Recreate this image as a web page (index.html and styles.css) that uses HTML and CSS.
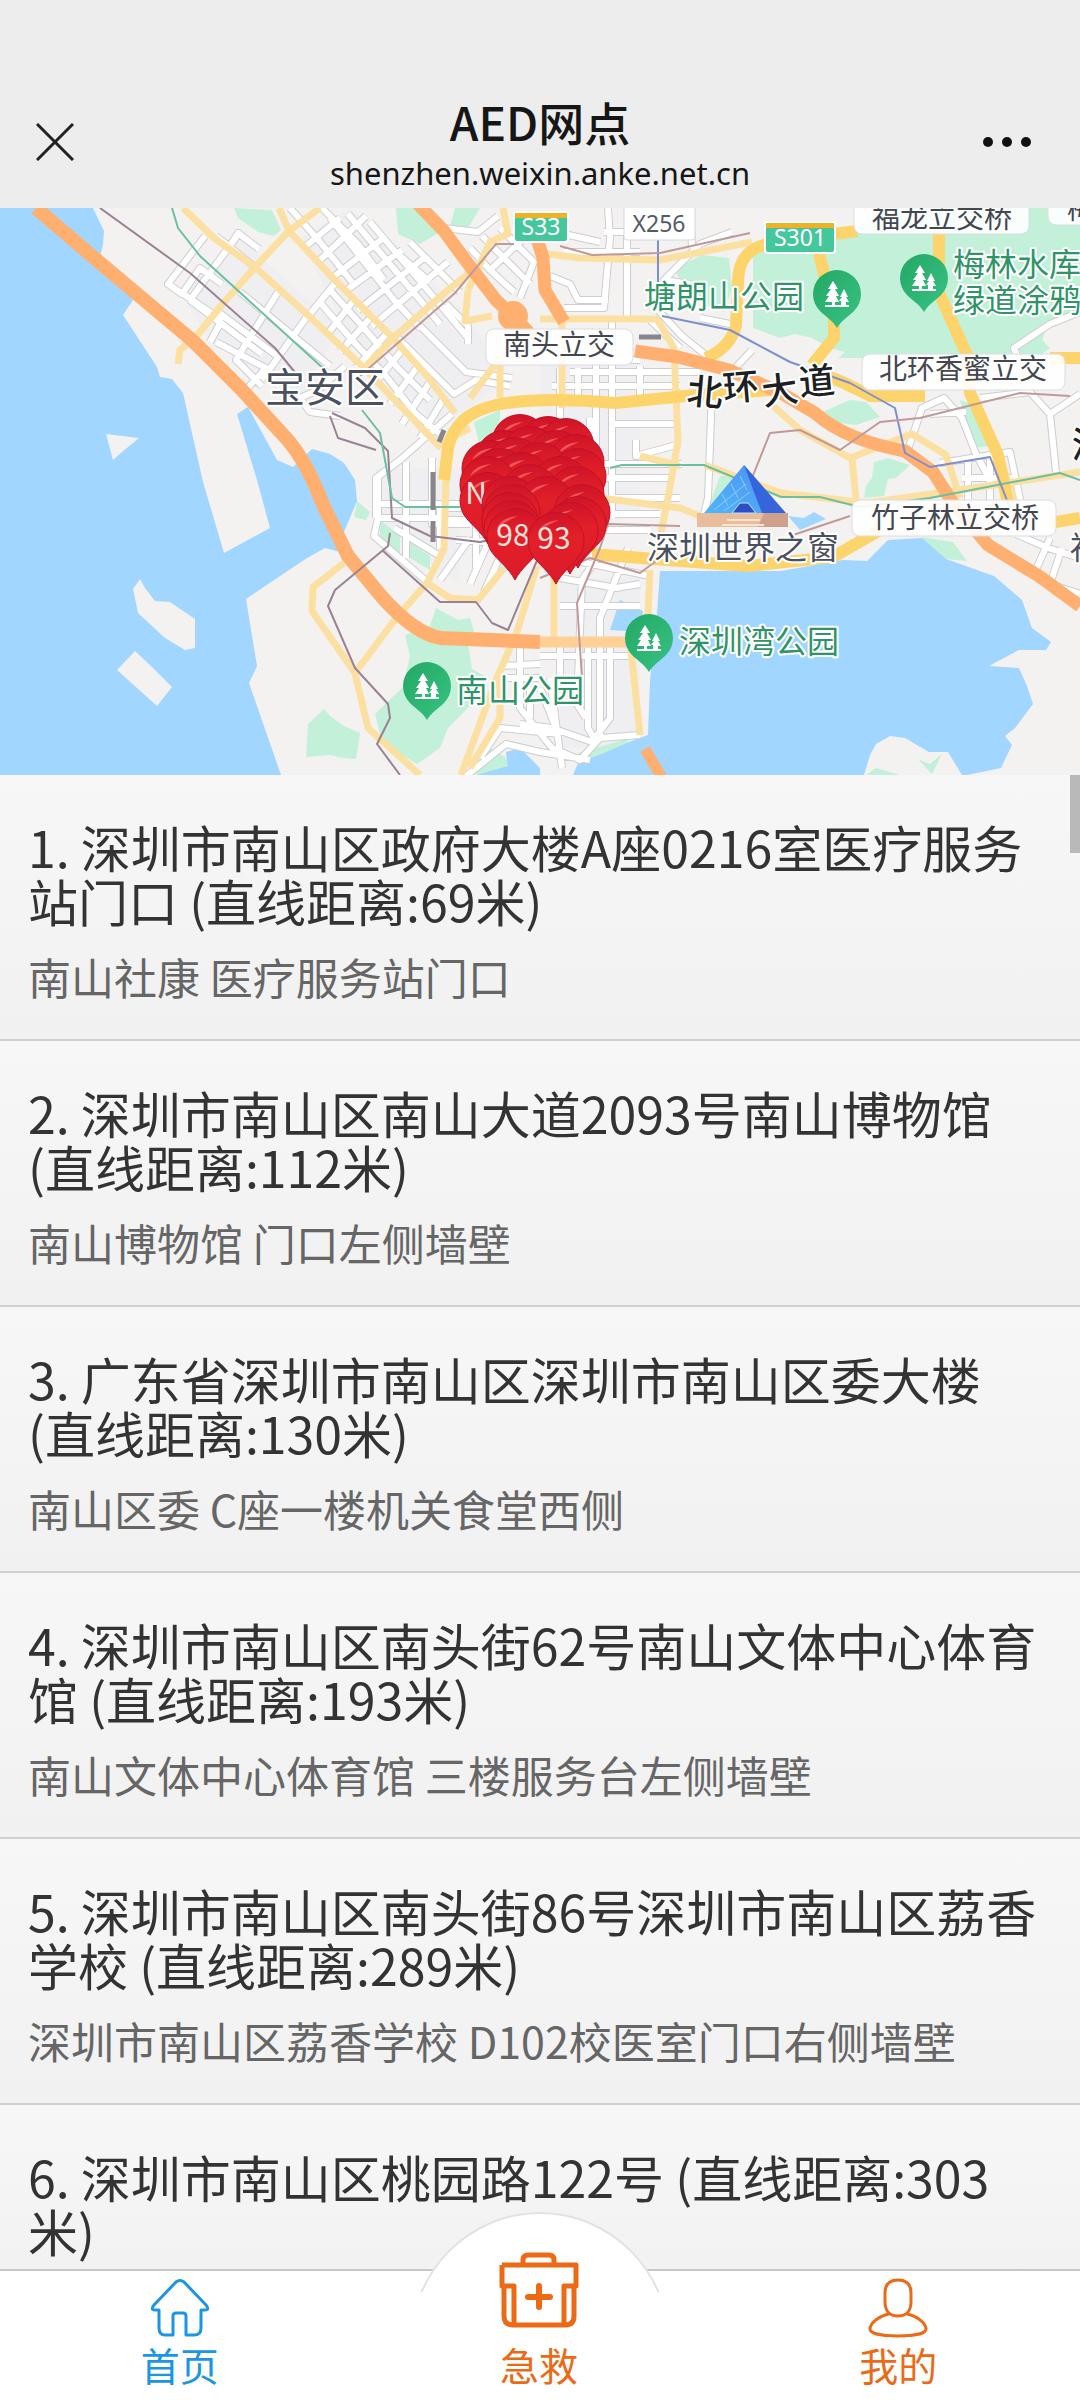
FILE: index.html
```html
<!DOCTYPE html>
<html lang="zh-CN">
<head>
    <meta charset="UTF-8">
    <meta name="viewport" content="width=device-width, initial-scale=1">
    <title>AED网点</title>
    <link rel="stylesheet" href="styles.css">
</head>
<body>

<div class="header">
    <button class="header-btn" type="button" aria-label="关闭">
        <svg width="38" height="38" viewBox="0 0 38 38"><path d="M1 1L37 37M37 1L1 37" stroke="#222" stroke-width="3" fill="none"/></svg>
    </button>
    <div class="header-title">
        <h1>AED网点</h1>
        <p>shenzhen.weixin.anke.net.cn</p>
    </div>
    <button class="header-btn more" type="button" aria-label="更多">
        <svg width="50" height="12" viewBox="0 0 50 12" fill="#111"><circle cx="6" cy="6" r="5"/><circle cx="25" cy="6" r="5"/><circle cx="44" cy="6" r="5"/></svg>
    </button>
</div>

<div class="map">
    <svg viewBox="0 0 1080 567" preserveAspectRatio="xMidYMin slice">
        <defs>
            <linearGradient id="park" x1="0" y1="0" x2="1" y2="1">
                <stop offset="0" stop-color="#24a765"/><stop offset="1" stop-color="#37c383"/>
            </linearGradient>
            <linearGradient id="red" x1="0" y1="0" x2="0" y2="1">
                <stop offset="0" stop-color="#cf1329"/><stop offset="0.35" stop-color="#e32028"/><stop offset="1" stop-color="#dc1a2b"/>
            </linearGradient>
            <linearGradient id="glass" x1="0" y1="1" x2="1" y2="0">
                <stop offset="0" stop-color="#4fb6fb"/><stop offset="1" stop-color="#4f8eee"/>
            </linearGradient>
            <g id="tree">
                <path d="M0 34C-4 27-12 22-17 17A24 24 0 1 1 17 17C12 22 4 27 0 34Z" fill="url(#park)"/>
                <path d="M-4-13L-9-5H-6L-11 2H-8L-12 8H-5V11H-12V13H12V11H9V8H12L9 3H11L7-5L3 3H5L2 7H4V11H-2V8H2L-1 2H2L-2-5H1Z" fill="#fff"/>
            </g>
            <g id="pin">
                <path d="M0 44C-6 32-18 24-24 15A28 28 0 1 1 24 15C18 24 6 32 0 44Z" fill="url(#red)" stroke="#c01226" stroke-width="1"/>
                <path d="M-18-8Q-13-19 3-20Q-9-15-18-8Z" fill="#f0565a"/>
            </g>
            <!-- 小路，先描灰边再描白色 -->
            <path id="streets" d="M205 28L168 76L222 112M240 24L190 92M216 28L256 60M230 38L238 25L259 41M168 76L182 86L200 60L222 76M190 92L262 146M278 84L236 152L262 178M306 110L262 172M222 112L210 134M216 134L266 160L244 184M240 84L330 158M218 104L280 150M345 158L318 182L300 190L310 204L340 208
                M290 0L320 34L352 74M306 38L340 10M318 54L366 8M332 70L386 28M344 84L402 42M358 102L424 50M372 118L448 54M330 10L394 92L420 120M348 6L440 116M370 14L448 106L468 130M322 0L358 36L384 72M396 44L430 74M410 34L460 84M336 74L310 106M354 92L326 128M372 108L340 144M390 122L356 160M404 140L374 176M418 158L390 196M430 174L402 216M444 190L420 230M452 206L400 252L376 270V310M318 92L352 132L386 168L414 204L440 226M330 82L364 120L398 160L430 192
                M444 20L478 24L498 8M470 40L490 62L522 32M482 28L530 76M500 20L534 54L520 90M490 62L514 84M398 130L454 186L476 172L510 178M420 118L466 164L512 170M446 96L468 118V136
                M378 270V310L374 328L430 376M406 254V350M432 250V316L470 316M376 296H460M380 310H440M394 320L440 348M440 340V300H470M456 332L500 334M470 330L440 372M490 330L470 376M504 340L484 384M444 312H476V360
                M608 0L610 30L604 100H564M627 20V112M604 24H628M550 68L570 76L578 92L608 92M564 26L600 34M564 44H640M560 160V210M578 160V190M612 112V310M596 120V300M570 164H700M566 150L640 152M640 158V190M552 178H680M590 210V262M612 216H676M636 232V248L680 236M600 256H682M596 270H670M612 290H680M612 306H660M606 322H650M712 182L708 290L704 306M650 112L680 140M690 76L664 72L700 36L732 24M690 0L692 40M656 100L682 128L712 152M726 170L752 142M700 110L740 118
                M560 370L616 380L640 376M562 350L650 368M560 398H640M604 340L582 372L578 470M628 340L600 410V530L640 527M560 434V470L586 510M540 448H632M550 470L562 560M588 440V520L596 534M610 440V510L592 534L552 520L520 516M500 458L540 456M506 470H540M520 440V500L552 540L580 552L600 530M466 568L506 536L540 544L590 552M480 550L500 520L560 526M540 480L556 520M530 480V510
                M905 250L922 200L944 190L962 210L976 246L990 272M930 206L966 204M980 190L1030 184L1050 206L1056 264M1030 184L1014 140L1050 116L1080 104M1050 206L1080 186M940 255L1010 244L1024 310M968 250V300M990 244V300M962 270H1012M1016 326L1048 340L1080 350M1050 330L1034 366M1062 340L1050 376L1080 386"/>
        </defs>

        <rect width="1080" height="567" fill="#f3f2f1"/>

        <!-- 街区 -->
        <g fill="#efeff1">
            <path d="M180 84L240 30L340 120L300 190L210 134Z"/>
            <path d="M300 30L350 0L460 100L510 170L440 220L350 130Z"/>
            <path d="M376 260H460V376L374 320ZM540 140H640V310H540ZM560 370H640V540H560Z"/>
        </g>

        <!-- 绿地 -->
        <g fill="#c3f0d9">
            <path d="M234 0L272 2L281 22L274 28L258 24L238 10ZM396 0H424L442 23L420 36L398 26ZM455 0H480L468 20L450 18Z"/>
            <path d="M674 61L702 47L729 50L732 80L724 104L690 90Z"/>
            <path d="M753 47L780 26L856 22L880 0H1080V106L1048 116L1042 132L1050 140L1036 150H838L845 144L830 140L812 130L795 126L780 130L753 120Z"/>
            <path d="M818 206L850 192L866 194L880 209L856 217L830 214Z"/>
            <path d="M874 254L888 250L910 257L896 270L888 271L884 288L864 290L866 278L872 270Z"/>
            <path d="M960 192L972 196L990 238L974 240ZM720 268H736L724 300H708ZM474 214L500 202V236L480 240ZM922 329L953 334L967 353L946 351L928 340Z"/>
            <path d="M324 501L330 508L344 518L360 525L356 551L344 550L330 547L306 549L308 516Z"/>
            <path d="M405 427L430 418L436 400L458 412L470 410L474 424L468 436L472 461L488 470L478 490L448 520L440 540L417 556L382 534L375 506L403 479L410 448Z"/>
            <path d="M357 293L370 304L366 312L354 309ZM380 312L400 328V346L380 330ZM410 334L430 348V362L410 350ZM470 560L490 540L510 552V568H478ZM578 545L630 530L610 560H586Z"/>
        </g>

        <!-- 海面 -->
        <g fill="#a0d6ff">
            <path d="M0 0H93L104 23L103 37L99 52L133 92L123 107L157 159L160 169L172 171L183 185L203 274L224 345L270 320L257 272L237 206L248 199L277 252L293 259L312 241L330 246L344 255L355 272L357 293L344 324L344 345L325 340L307 350L246 391L257 458L249 475L281 567H0Z"/>
            <path d="M660 363L781 363L843 352L867 353L888 332L922 330L946 351L994 368L1022 392L1032 420L1051 434L1046 442L1019 442L989 458L1019 460L1027 478L1033 496L1015 520L1005 528L1012 537L1001 560L967 567H962L948 544L929 544L905 530L890 528L876 536L870 547L864 567H573L578 555L604 545L629 534L648 527L650 472L656 420Z"/>
            <path d="M620 392L643 403L640 424L610 422ZM506 544L520 540L540 560V567H477L508 558ZM788 308L804 310L814 304L826 311L800 322Z"/>
        </g>
        <path d="M866 567L876 560L900 567ZM918 551L930 556L942 546L932 566L928 562Z" fill="#c3f0d9"/>
        <g fill="#f3f2f1">
            <path d="M106 226L139 230L122 244L113 252Z"/>
            <path d="M140 371L145 380L155 393L170 394L195 411V440L185 442L165 430L138 405L133 381Z"/>
            <path d="M135 443L152 459L172 479L157 498L117 462Z"/>
        </g>

        <g fill="none" stroke-linejoin="round">
            <use href="#streets" stroke="#cdcdd2" stroke-width="8"/>
            <use href="#streets" stroke="#fff" stroke-width="6"/>

            <!-- 次干道 -->
            <g stroke="#fbe0a2" stroke-width="7">
                <path d="M183 0L214 30L255 59L310 109L365 161L441 240M320 0L289 23L255 59L220 99L195 130L180 142L178 156M279 0L289 23L331 68L365 102L393 130L427 168L455 205M360 165L393 130L448 82L468 66M468 82L465 113L492 108M503 0L508 26L490 34L468 82"/>
                <path d="M344 355L313 379L312 403L355 465L368 520L420 567M355 465L396 410L427 375L444 341L446 272M427 375L450 390L478 392L504 360M540 45L580 50L660 52L752 34M540 111H657L674 140L678 233L668 290L660 330M562 112V200M554 368V434M537 358L517 424L496 472L461 567M470 560L500 510V470M650 362L648 406L630 434L634 470L640 527"/>
                <path d="M705 257L781 285L867 295L988 278L1080 264M770 195L800 222L850 250L912 226L946 247L960 290M852 250L856 292M1000 250L1015 295M600 290L680 300L705 310M640 248L680 258"/>
                <path d="M440 236L470 220M470 190L500 150V190"/>
            </g>

            <!-- 快速路 -->
            <g stroke="#fdd36b" stroke-width="12">
                <path d="M444 272L448 240Q455 206 496 197T616 195L685 188L770 182"/>
                <path d="M857 23L833 26L775 35Q738 38 738 75L736 118Q730 140 706 150M819 45L834 108L834 130L812 157M939 26V85L967 147L970 185L998 247L1008 296"/>
                <path d="M592 346L654 351L747 358L833 349L880 322M1050 315L1080 310M815 164L840 173L871 188L925 188M1050 150H1080"/>
            </g>

            <!-- 高速 -->
            <g stroke="#ffb070">
                <path d="M36 0L93 49L193 133L241 181L286 230Q306 252 324 299L348 348L382 389Q415 426 441 430L540 434" stroke-width="14"/>
                <path d="M418 -4L444 23L472 61L496 92L517 112L534 130M535 24L543 50L545 82L564 114M635 143L678 149L729 162L781 185L815 205Q845 232 905 243L933 264L953 295L988 337L1039 368L1080 398" stroke-width="13"/>
                <path d="M645 541L662 570" stroke-width="11"/>
                <path d="M540 434H628" stroke="#ffd095" stroke-width="11"/>
            </g>
            <circle cx="513" cy="108" r="15" fill="#ffb070"/>

            <!-- 铁路和地铁 -->
            <path d="M100 0L190 65L275 140L298 168M332 205L365 220L388 243L392 310L430 328L480 334L510 328M330 208L338 230L376 242M390 325L388 338L335 382L328 398L355 460L388 496L390 510L377 536L400 567M382 342L440 394L476 394L492 415L508 422L538 350" stroke="#9a8294" stroke-width="2"/>
            <path d="M172 0L178 20L200 48L325 162M362 202L380 225L392 290L405 299H460M610 260L622 257H704L781 289L820 289L860 299L930 290L1060 265L1080 272" stroke="#6cbfa0" stroke-width="2"/>
            <path d="M658 30V75M662 108L730 122L790 154L850 175L895 200L905 245L930 259L990 249L1010 300" stroke="#7f8fce" stroke-width="2"/>
            <path d="M514 36H496L455 85L360 168M560 38L592 47L660 45L750 25M752 270L770 225L800 222L840 242L880 214L920 210L1020 185L1070 188M540 370L590 350L640 365L660 350M582 470L577 395L600 340L608 316L680 318M790 328L850 308" stroke="#c09a98" stroke-width="2"/>
            <path d="M439 234L444 222M433 264V302M433 313V334M639 129H661" stroke="#88868c" stroke-width="5"/>
        </g>

        <!-- 世界之窗 -->
        <path d="M697 305H788V319H697Z" fill="#e8bd9c"/>
        <path d="M764 305H788V319H758Z" fill="#cfa08c"/>
        <path d="M727 312H760M722 317H764" stroke="#f7e2d2" stroke-width="2"/>
        <path d="M744 257L704 305H784Z" fill="url(#glass)"/>
        <path d="M744 257L786 305H762L754 284Z" fill="#3565da"/>
        <path d="M732 305L740 295H748L756 305Z" fill="#2b4fc4" stroke="#bfe3ff" stroke-width="1"/>
        <path d="M714 302L746 276M724 303L750 284M722 286L728 298M731 276L738 290M740 268L747 282" stroke="#8fcbfc" stroke-width="1"/>

        <!-- 道路编号 -->
        <g class="road-no">
            <rect x="514" y="4" width="54" height="30" rx="3" fill="#45c79d" stroke="#fff" stroke-width="2"/>
            <path d="M515 5H567V10H515Z" fill="#efb224"/>
            <text x="541" y="27" fill="#fff">S33</text>
            <rect x="765" y="14" width="70" height="31" rx="3" fill="#45c79d" stroke="#fff" stroke-width="2"/>
            <path d="M766 15H834V20H766Z" fill="#efb224"/>
            <text x="800" y="38" fill="#fff">S301</text>
            <rect x="624" y="-6" width="71" height="38" rx="3" fill="#fff" stroke="#d5d5df" stroke-width="1"/>
            <text x="659" y="24" fill="#555b66">X256</text>
        </g>

        <!-- 立交 -->
        <g class="junction">
            <rect x="486" y="121" width="147" height="36" rx="8"/><text x="559" y="147">南头立交</text>
            <rect x="854" y="-10" width="175" height="36" rx="8"/><text x="942" y="20">福龙立交桥</text>
            <rect x="1048" y="-10" width="80" height="27" rx="8"/><text x="1081" y="11">梅</text>
            <rect x="862" y="146" width="203" height="36" rx="8"/><text x="963" y="171">北环香蜜立交</text>
            <rect x="852" y="292" width="204" height="36" rx="8"/><text x="955" y="320">竹子林立交桥</text>
        </g>

        <g class="place">
            <text class="district" x="325" y="194">宝安区</text>
            <text x="743" y="351">深圳世界之窗</text>
            <text x="1086" y="351">福</text>
            <text class="road" x="705" y="197" transform="rotate(5 705 185)">北</text>
            <text class="road" x="741" y="192" transform="rotate(-5 741 181)">环</text>
            <text class="road" x="780" y="195" transform="rotate(-8 780 183)">大</text>
            <text class="road" x="817" y="186" transform="rotate(-5 817 175)">道</text>
            <text class="road" x="1090" y="250">深</text>
        </g>
        <g class="place park">
            <text x="724" y="100">塘朗山公园</text>
            <text x="1017" y="68">梅林水库</text>
            <text x="1017" y="104">绿道涂鸦</text>
            <text x="520" y="494">南山公园</text>
            <text x="759" y="445">深圳湾公园</text>
        </g>
        <use href="#tree" x="837" y="86"/>
        <use href="#tree" x="924" y="70"/>
        <use href="#tree" x="427" y="478"/>
        <use href="#tree" x="649" y="430"/>

        <!-- AED 标记 -->
        <g class="pins">
            <use href="#pin" x="520" y="234"/><use href="#pin" x="548" y="236"/><use href="#pin" x="566" y="238"/>
            <use href="#pin" x="504" y="250"/><use href="#pin" x="530" y="246"/><use href="#pin" x="556" y="250"/>
            <use href="#pin" x="576" y="254"/><use href="#pin" x="490" y="260"/><use href="#pin" x="515" y="257"/>
            <use href="#pin" x="540" y="262"/><use href="#pin" x="500" y="268"/><use href="#pin" x="578" y="268"/>
            <use href="#pin" x="522" y="272"/><use href="#pin" x="560" y="276"/><use href="#pin" x="488" y="276"/>
            <use href="#pin" x="530" y="284"/><use href="#pin" x="576" y="286"/><use href="#pin" x="488" y="292"/>
            <text x="476" y="296">N</text>
            <use href="#pin" x="510" y="296"/><use href="#pin" x="546" y="296"/>
            <use href="#pin" x="582" y="304"/><use href="#pin" x="512" y="304"/><use href="#pin" x="510" y="312"/>
            <use href="#pin" x="512" y="320"/><use href="#pin" x="578" y="316"/><use href="#pin" x="570" y="322"/>
            <use href="#pin" x="515" y="328"/><text x="513" y="338">98</text>
            <use href="#pin" x="556" y="332"/><text x="554" y="341">93</text>
        </g>
    </svg>
</div>

<div class="list">
    <a class="item" href="#">
        <h2>1. 深圳市南山区政府大楼A座0216室医疗服务站门口 (直线距离:69米)</h2>
        <p>南山社康 医疗服务站门口</p>
    </a>
    <a class="item" href="#">
        <h2>2. 深圳市南山区南山大道2093号南山博物馆 (直线距离:112米)</h2>
        <p>南山博物馆 门口左侧墙壁</p>
    </a>
    <a class="item" href="#">
        <h2>3. 广东省深圳市南山区深圳市南山区委大楼 (直线距离:130米)</h2>
        <p>南山区委 C座一楼机关食堂西侧</p>
    </a>
    <a class="item" href="#">
        <h2>4. 深圳市南山区南头街62号南山文体中心体育馆 (直线距离:193米)</h2>
        <p>南山文体中心体育馆 三楼服务台左侧墙壁</p>
    </a>
    <a class="item" href="#">
        <h2>5. 深圳市南山区南头街86号深圳市南山区荔香学校 (直线距离:289米)</h2>
        <p>深圳市南山区荔香学校 D102校医室门口右侧墙壁</p>
    </a>
    <a class="item" href="#">
        <h2>6. 深圳市南山区桃园路122号 (直线距离:303米)</h2>
    </a>
    <div class="scroll-thumb"></div>
</div>

<div class="tabbar">
    <div class="bump"></div>
    <a class="tab active" href="#">
        <svg width="60" height="60" viewBox="0 0 60 60"><path d="M26 4Q30 1 34 4L56 27Q60 32 55 32H51V50Q51 57 44 57H36V38Q36 35 33 35H26Q23 35 23 38V57H15Q9 57 9 50V32H5Q0 32 4 27Z"/></svg>
        <span>首页</span>
    </a>
    <a class="tab" href="#">
        <svg class="kit" width="80" height="76" viewBox="0 0 80 76"><path d="M24 12V8Q24 3 29 3H50Q55 3 55 8V12M3 13H77V34H65V73M3 13V34H15V73M5 34V64Q5 73 14 73H66Q75 73 75 64V34"/><path d="M40 34V55M29 45H51" stroke-width="6" stroke-linecap="round"/></svg>
        <span>急救</span>
    </a>
    <a class="tab" href="#">
        <svg width="60" height="60" viewBox="0 0 60 60"><path d="M30 2C21 2 17 7 17 15V24C17 33 22 38 30 38S43 33 43 24V15C43 7 39 2 30 2ZM21 36C10 38 2 46 2 51C2 55 12 58 30 58S58 55 58 51C58 46 50 38 39 36"/></svg>
        <span>我的</span>
    </a>
</div>

</body>
</html>
```

FILE: styles.css
```css
* {
    box-sizing: border-box;
}

body {
    margin: 0;
    height: 100vh;
    display: flex;
    flex-direction: column;
    overflow: hidden;
    background-color: #f4f4f4;
    font-family: "Noto Sans CJK SC", "Noto Sans", sans-serif;
}

h1, h2, p {
    margin: 0;
    font-weight: normal;
}

a {
    text-decoration: none;
}

/* 顶部标题 */
.header {
    display: flex;
    justify-content: space-between;
    align-items: center;
    flex: none;
    padding: 90px 28px 14px;
    background-color: #ededed;
}

.header-btn {
    display: flex;
    align-items: center;
    width: 80px;
    height: 54px;
    padding: 0 8px;
    border: none;
    background: none;
}

.header-btn.more {
    justify-content: flex-end;
    padding: 0 20px;
}

.header-btn svg {
    flex: none;
}

.header-title {
    text-align: center;
    color: #161616;
}

.header-title h1 {
    font-size: 46px;
    line-height: 62px;
    font-weight: 500;
}

.header-title p {
    font-family: "Noto Sans", "Noto Sans CJK SC", sans-serif;
    font-size: 31px;
    line-height: 42px;
}

/* 地图 */
.map {
    flex: none;
    height: 567px;
    overflow: hidden;
    background-color: #f3f2f1;
}

.map svg {
    display: block;
    width: 100%;
    height: 100%;
}

.map text {
    text-anchor: middle;
}

.road-no text {
    font-family: "Noto Sans", sans-serif;
    font-size: 23px;
}

.junction rect {
    fill: #fff;
    fill-opacity: 0.9;
    stroke: #dcdce2;
}

.junction text {
    font-size: 28px;
    fill: #44474f;
}

.place text {
    font-size: 32px;
    fill: #4a5060;
    stroke: #fff;
    stroke-width: 4px;
    stroke-linejoin: round;
    paint-order: stroke;
}

.place .district {
    font-size: 40px;
}

.place .road {
    font-size: 36px;
    font-weight: 500;
    fill: #1d1f24;
}

.park text {
    fill: #2f9468;
}

.pins text {
    font-size: 30px;
    fill: #ffe3dc;
}

/* 网点列表 */
.list {
    position: relative;
    flex: 1;
    min-height: 0;
    overflow: hidden;
}

.item {
    display: block;
    padding: 44px 28px 36px;
    border-bottom: 2px solid #d0d0d0;
    background: linear-gradient(#f7f7f7, #f1f1f1);
}

.item h2 {
    font-size: 50px;
    line-height: 54px;
    color: #333;
}

.item p {
    margin-top: 22px;
    font-size: 43px;
    line-height: 54px;
    color: #666;
}

.scroll-thumb {
    position: absolute;
    top: 0;
    right: 0;
    width: 10px;
    height: 78px;
    background-color: #b9b9b9;
}

/* 底部导航 */
.tabbar {
    position: relative;
    display: flex;
    flex: none;
    height: 131px;
    padding-right: 2px;
    border-top: 2px solid #c8c8c8;
    background-color: #fff;
}

.bump {
    position: absolute;
    left: 50%;
    bottom: 108px;
    width: 260px;
    height: 80px;
    margin-left: -130px;
    overflow: hidden;
}

.bump::before {
    content: "";
    display: block;
    height: 260px;
    border: 2px solid #e2e2e2;
    border-radius: 50%;
    background-color: #fff;
}

.tab {
    position: relative;
    display: flex;
    flex: 1;
    flex-direction: column;
    justify-content: flex-end;
    align-items: center;
    padding-bottom: 11px;
    color: #ec6a16;
}

.tab.active {
    color: #1b96e2;
}

.tab svg {
    flex: none;
    margin-bottom: 1px;
    fill: none;
    stroke: currentColor;
    stroke-width: 3px;
    stroke-linejoin: round;
}

.tab .kit {
    margin-bottom: 11px;
    stroke-width: 5px;
}

.tab span {
    font-size: 39px;
    line-height: 50px;
}
```
